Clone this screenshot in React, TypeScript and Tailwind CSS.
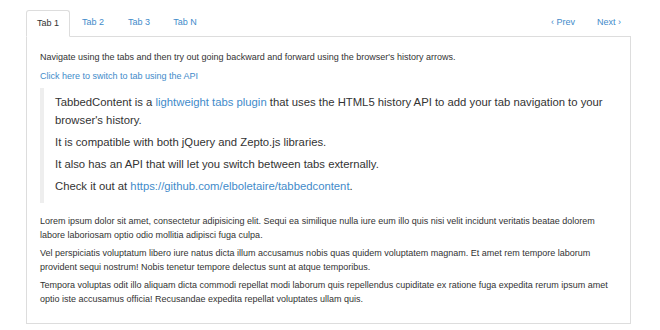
import React from "react";

export default function App() {
  const link = "text-[#428bca]";
  return (
    <div className="w-[660px] h-[330px] bg-white font-['Liberation_Sans',Arial,sans-serif] text-[#333]">
      <div className="pt-[10px] pl-[26px] pr-[29px]">
        <div className="flex items-end h-[26px]">
          <div className="flex">
            <div className="w-[44px] h-[27px] -mb-px border border-[#ddd] border-b-white bg-white rounded-t-[3px] text-[9px] flex items-center justify-center relative z-10">
              Tab 1
            </div>
            {["Tab 2", "Tab 3", "Tab N"].map((t) => (
              <div key={t} className={`w-[46px] h-[26px] text-[9px] flex items-center justify-center ${link}`}>
                {t}
              </div>
            ))}
          </div>
          <div className="ml-auto flex h-[26px] items-center text-[9px] text-[#428bca]">
            <span className="mr-[22px]">‹ Prev</span>
            <span className="mr-[10px]">Next ›</span>
          </div>
        </div>
        <div className="border border-[#ddd] h-[288px] px-[13px] pt-[13px]">
          <p className="text-[9px] leading-[14px]">
            Navigate using the tabs and then try out going backward and forward using the browser's history arrows.
          </p>
          <p className={`text-[9px] leading-[14px] mt-[5px] ${link}`}>Click here to switch to tab using the API</p>
          <div className="mt-[5px] border-l-[4px] border-[#eee] pl-[11px] pt-[5px] pb-[8px] text-[11.3px] leading-[18px]">
            <p>
              TabbedContent is a <span className={link}>lightweight tabs plugin</span> that uses the HTML5 history API to add your tab navigation to your browser's history.
            </p>
            <p className="mt-[4px]">It is compatible with both jQuery and Zepto.js libraries.</p>
            <p className="mt-[4px]">It also has an API that will let you switch between tabs externally.</p>
            <p className="mt-[4px]">
              Check it out at <span className={link}>https://github.com/elboletaire/tabbedcontent</span>.
            </p>
          </div>
          <div className="mt-[11px] text-[9px] leading-[14px]">
            <p>
              Lorem ipsum dolor sit amet, consectetur adipisicing elit. Sequi ea similique nulla iure eum illo quis nisi velit incidunt veritatis beatae dolorem labore laboriosam optio odio mollitia adipisci fuga culpa.
            </p>
            <p className="mt-[4px]">
              Vel perspiciatis voluptatum libero iure natus dicta illum accusamus nobis quas quidem voluptatem magnam. Et amet rem tempore laborum provident sequi nostrum! Nobis tenetur tempore delectus sunt at atque temporibus.
            </p>
            <p className="mt-[4px]">
              Tempora voluptas odit illo aliquam dicta commodi repellat modi laborum quis repellendus cupiditate ex ratione fuga expedita rerum ipsum amet optio iste accusamus officia! Recusandae expedita repellat voluptates ullam quis.
            </p>
          </div>
        </div>
      </div>
    </div>
  );
}
